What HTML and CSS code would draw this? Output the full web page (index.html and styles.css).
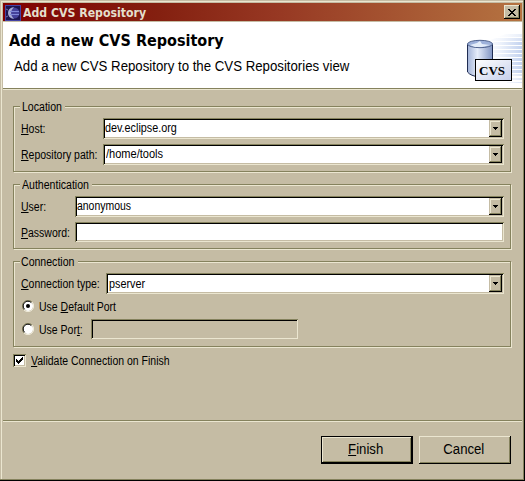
FILE: index.html
```html
<!DOCTYPE html>
<html lang="en">
<head>
<meta charset="utf-8">
<title>Add CVS Repository</title>
<link rel="stylesheet" href="styles.css">
</head>
<body>
<div class="window">
  <header class="titlebar">
    <svg class="app-icon" width="16" height="16" viewBox="0 0 16 16">
      <rect x=".5" y=".5" width="15" height="15" fill="#1c1650" stroke="#4543a5"/>
      <circle cx="9" cy="8" r="5.6" fill="#45429a"/>
      <path d="M9 2Q3 3 3 8t6 6Q6 11 6 8t3-6z" fill="#a9add4"/>
      <path d="M1 4l2 1M1 12l2-1" stroke="#75709f"/>
      <path d="M5 6.5h9M5 9.5h9" stroke="#8088d6"/>
    </svg>
    <h1><span class="caption">Add CVS Repository</span></h1>
    <button class="close" aria-label="Close"><svg width="8" height="7" viewBox="0 0 8 7" shape-rendering="crispEdges"><path d="M0 0h2v1h1v1h2V1h1V0h2v1H7v1H6v1H5v1h1v1h1v1h1v1H6V6H5V5H3v1H2v1H0V6h1V5h1V4h1V3H2V2H1V1H0z"/></svg></button>
  </header>
  <section class="banner">
    <div class="banner-copy">
      <h2>Add a new CVS Repository</h2>
      <p>Add a new CVS Repository to the CVS Repositories view</p>
    </div>
    <svg class="banner-art" width="67" height="66" viewBox="455 22 67 66">
      <defs>
        <linearGradient id="stripe"><stop stop-color="#fff"/><stop offset=".4" stop-color="#edf2fb"/><stop offset="1" stop-color="#c3d2ef"/></linearGradient>
        <linearGradient id="body"><stop stop-color="#a2b3d8"/><stop offset=".4" stop-color="#e6edfa"/><stop offset="1" stop-color="#8094c2"/></linearGradient>
        <linearGradient id="card" x2="1" y2="1"><stop stop-color="#fff"/><stop offset="1" stop-color="#c5cfeb"/></linearGradient>
      </defs>
      <g fill="url(#stripe)">
        <path opacity=".4" d="M506 34h16v3h-25z"/><path opacity=".7" d="M496 38h26v3h-35z"/>
        <path d="M490 42h32v3h-36zM488 46h34v3h-34zM488 50h34v3h-34zM488 54h34v3h-34zM488 58h34v3h-34zM494 62h28v3h-28zM496 66h26v3h-26zM498 70h24v3h-24z"/>
        <path opacity=".6" d="M500 74h22v2h-22zM502 78h20v2h-20zM507 82h15v1h-15z"/>
      </g>
      <path d="M467.5 44v28q3 4 12 5 10-1 13-5V44z" fill="url(#body)" stroke="#202c52"/>
      <ellipse cx="480" cy="44" rx="12.5" ry="3.7" fill="#9db1da" stroke="#52658f"/>
      <path d="M470 45l7-2 3-2 2 3 8 1-8 2h-7z" fill="#e4edf9"/>
      <rect x="475.5" y="59.5" width="36" height="21" fill="url(#card)" stroke="#000"/>
      <text x="479" y="74.5" class="cvs" textLength="26" lengthAdjust="spacingAndGlyphs">CVS</text>
    </svg>
  </section>
  <main>
    <section class="group location">
      <h3><span>Location</span></h3>
      <div class="row"><label><u>H</u>ost:</label><div class="field"><span class="v-host">dev.eclipse.org</span><i class="drop"></i></div></div>
      <div class="row second"><label><u>R</u>epository path:</label><div class="field"><span class="v-path">/home/tools</span><i class="drop"></i></div></div>
    </section>
    <section class="group auth">
      <h3><span>Authentication</span></h3>
      <div class="row"><label><u>U</u>ser:</label><div class="field"><span class="v-user">anonymous</span><i class="drop"></i></div></div>
      <div class="row second"><label><u>P</u>assword:</label><div class="field plain"></div></div>
    </section>
    <section class="group connection">
      <h3><span>Connection</span></h3>
      <div class="row"><label><u>C</u>onnection type:</label><div class="field"><span class="v-type">pserver</span><i class="drop"></i></div></div>
      <div class="option"><svg class="radio" width="12" height="12" viewBox="0 0 12 12"><use href="#ring"/><circle cx="6" cy="6" r="2"/></svg><label>Use <u>D</u>efault Port</label></div>
      <div class="option port"><svg class="radio" width="12" height="12" viewBox="0 0 12 12"><g id="ring" fill="none"><circle cx="6" cy="6" r="5" fill="#fff"/><path d="M2 10A5.6 5.6 0 0 1 10 2" stroke="#85825d"/><path d="M2.6 9.3A4.7 4.7 0 0 1 9.3 2.6" stroke="#000"/><path d="M10 2A5.6 5.6 0 0 1 2 10" stroke="#f0eddc"/></g></svg><label>Use Por<u>t</u>:</label><div class="field disabled"></div></div>
    </section>
    <div class="validate"><span class="check"><svg width="7" height="7" viewBox="0 0 7 7" shape-rendering="crispEdges"><path d="M0 2h1v1h1v1h1V3h1V2h1V1h1V0h1v3H6v1H5v1H4v1H3v1H2V6H1V5H0z"/></svg></span><label><u>V</u>alidate Connection on Finish</label></div>
  </main>
  <footer>
    <button class="push default"><span><u>F</u>inish</span></button>
    <button class="push"><span>Cancel</span></button>
  </footer>
</div>
</body>
</html>
```
FILE: styles.css
```css
* { box-sizing: border-box; }
body { margin: 0; font: 12px/14px "Liberation Sans", Arial, sans-serif; color: #000; }
h1, h2, h3, p { margin: 0; font-size: inherit; font-weight: normal; }
button { font: inherit; color: inherit; padding: 0; border: 0; background: #c5bca4; }
.window { width: 525px; height: 481px; background: #c5bca4; padding: 3px 3px 2px; display: flex; flex-direction: column;
  box-shadow: inset -1px -1px #000, inset -2px -2px #85825d, inset 1px 1px #c5bca4, inset 2px 2px #ebe6d0; }
.titlebar { height: 18px; display: flex; align-items: center; padding: 0 2px; background: linear-gradient(90deg, #800000, #842010 30%, #963722 52%, #b57341); }
.app-icon { flex: none; margin-top: 1px; }
.titlebar h1 { flex: 1; margin: 1px 0 0 2px; font: bold 12px/18px "DejaVu Sans Condensed", "DejaVu Sans", sans-serif; color: #e4dfcc; }
.caption { display: inline-block; white-space: nowrap; transform: scaleX(1.015); transform-origin: 0 0; }
.close { width: 16px; height: 14px; display: flex; align-items: center; justify-content: center; box-shadow: inset -1px -1px #000, inset 1px 1px #ebe6d0, inset -2px -2px #85825d; }
.banner { height: 66px; margin-top: 1px; background: #fff; display: flex; justify-content: space-between; width: 519px; }
.banner-copy { padding: 9px 0 0 6px; white-space: nowrap; }
.banner h2 { font: bold 16px/20px "DejaVu Sans Condensed", "DejaVu Sans", sans-serif; }
.banner p { font-size: 14px; line-height: 18px; margin: 6px 0 0 5px; transform: scaleX(.945); transform-origin: 0 0; }
.cvs { font: bold 13px "Liberation Serif", serif; }
main { width: 519px; height: 332px; border-top: 1px solid #85825d; box-shadow: inset 0 1px #ebe6d0; padding: 17px 10px 0; }
.group { width: 498px; border: 1px solid #85825d; box-shadow: inset 1px 1px #ebe6d0, 1px 1px #ebe6d0; padding: 0 7px; }
.location { height: 66px; }
.auth { height: 65px; margin-top: 12px; }
.connection { height: 86px; margin-top: 12px; }
.group h3 { height: 14px; margin: -7px 0 4px -1px; padding-left: 2px; background: #c5bca4; white-space: nowrap; }
.location h3 { width: 45px; }
.auth h3 { width: 72px; }
.connection h3 { width: 58px; padding-left: 1px; }
.group h3 span { display: inline-block; transform: scaleX(.88); transform-origin: 0 0; }
.row { display: flex; width: 483px; height: 21px; align-items: center; }
.auth .row.second { height: 20px; }
.second { margin-top: 5px; }
label { flex: none; white-space: nowrap; padding-top: 1px; transform: scaleX(.874); transform-origin: 0 0; }
u { text-decoration: underline 1px; text-underline-offset: 1px; text-decoration-skip-ink: none; }
.location label { width: 82px; }
.auth label { width: 54px; }
.connection .row label { width: 85px; }
.field { flex: 1; height: 21px; background: #fff; display: flex; justify-content: space-between; padding: 2px;
  box-shadow: inset 1px 1px #85825d, inset -1px -1px #ebe6d0, inset 2px 2px #000, inset -2px -2px #c5bca4; }
.field span { margin-top: 1px; white-space: nowrap; transform: scaleX(.9); transform-origin: 0 0; }
.field .v-path { margin-left: 1px; transform: scaleX(.92); }
.field .v-user { transform: scaleX(.87); }
.field .v-type { margin: 2px 0 0 1px; }
.plain { height: 20px; }
.drop { width: 13px; height: 17px; background: #c5bca4; display: flex; justify-content: center; padding-top: 7px;
  box-shadow: inset -1px -1px #000, inset 1px 1px #c5bca4, inset -2px -2px #85825d, inset 2px 2px #ebe6d0; }
.drop::before { content: ""; width: 5px; height: 3px;
  background: linear-gradient(#000, #000) 0 0 / 5px 1px no-repeat, linear-gradient(#000, #000) 1px 1px / 3px 1px no-repeat, linear-gradient(#000, #000) 2px 2px / 1px 1px no-repeat; }
.option { display: flex; align-items: center; height: 14px; margin-top: 5px; }
.radio { flex: none; margin: 0 5px 0 1px; }
.port { margin-top: 6px; height: 20px; }
.port label { width: 52px; }
.field.disabled { flex: none; width: 207px; height: 20px; background: #c5bca4; }
.validate { display: flex; align-items: center; height: 14px; margin-top: 6px; }
.check { width: 13px; height: 13px; background: #fff; display: flex; padding: 3px; box-shadow: inset 1px 1px #85825d, inset -1px -1px #ebe6d0, inset 2px 2px #000, inset -2px -2px #c5bca4; }
.validate label { margin-left: 5px; }
footer { width: 519px; border-top: 1px solid #85825d; box-shadow: inset 0 1px #ebe6d0; display: flex; justify-content: flex-end; gap: 6px; padding: 15px 11px 0; }
.push { width: 92px; height: 28px; padding: 0 2px 2px 0; font-size: 14px; line-height: 16px; box-shadow: inset -1px -1px #000, inset 1px 1px #ebe6d0, inset -2px -2px #85825d; }
.push.default { box-shadow: inset 0 0 0 1px #000, inset -2px -2px #000, inset 2px 2px #ebe6d0, inset -3px -3px #85825d; }
.push span { display: inline-block; transform: scaleX(.94); }
```
